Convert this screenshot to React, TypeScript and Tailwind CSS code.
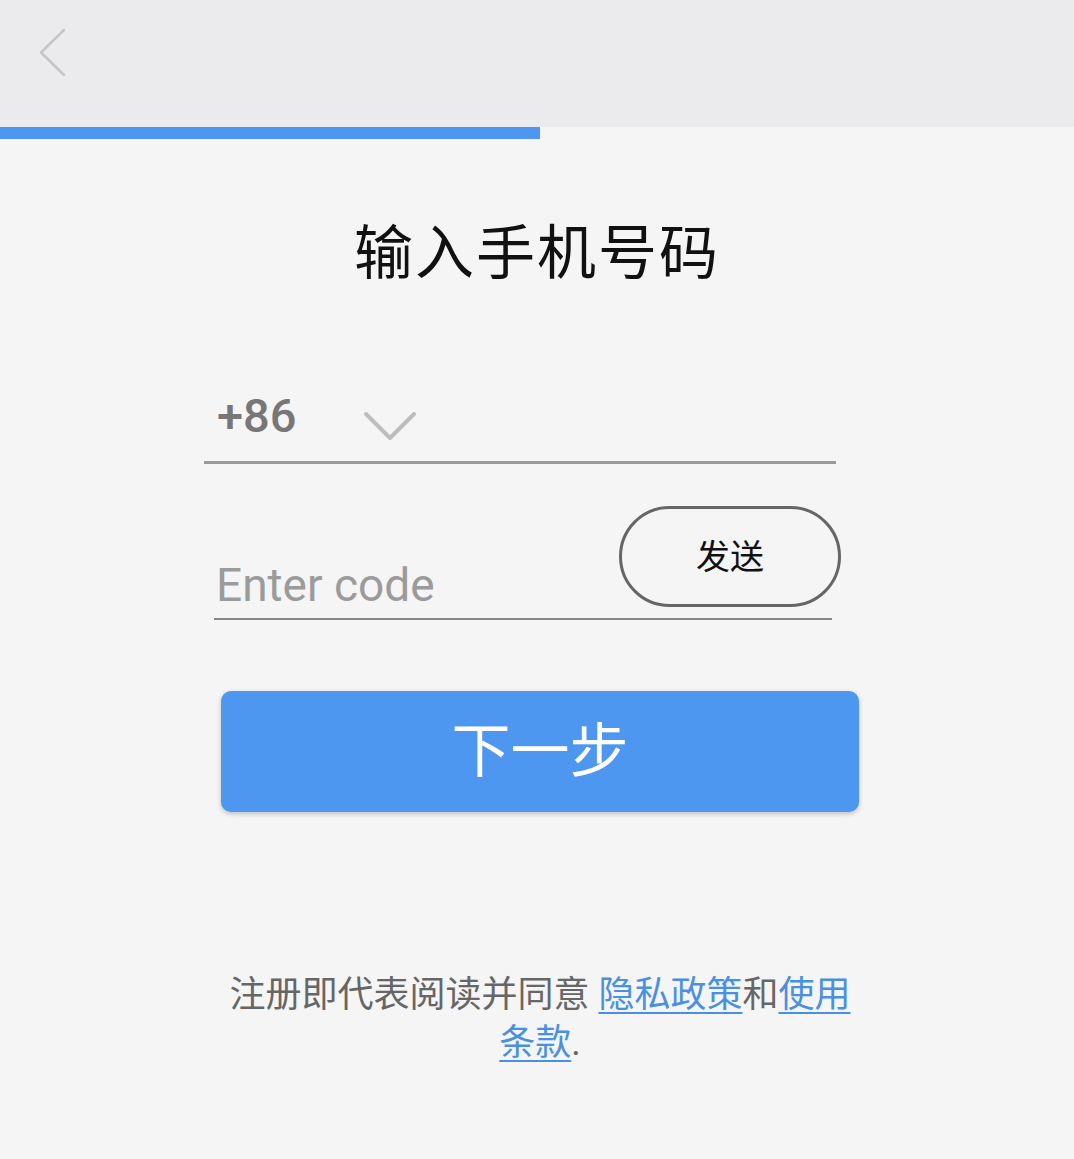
import React from 'react'

const sans = 'font-["Roboto","Noto_Sans_CJK_SC",sans-serif]'

export default function App() {
  return (
    <div className={`min-h-[1159px] w-[1074px] bg-[#f5f5f5] ${sans}`}>
      {/* top bar */}
      <header className="h-[127px] bg-[#ebebed] flex items-start">
        <button className="ml-[38px] mt-[28px] w-[30px] h-[50px] flex items-center justify-center">
          <svg width="30" height="50" viewBox="0 0 30 50" fill="none">
            <polyline points="26,2 3,24.5 26,47" stroke="#c6c6c8" strokeWidth="2.5" strokeLinecap="round" strokeLinejoin="round" />
          </svg>
        </button>
      </header>
      <div className="h-3 w-[540px] bg-[#4d97f0]" />

      <main className="flex flex-col">
        <h1 className="mt-[85px] text-center text-[59px] leading-none text-[#111] font-normal tracking-[2px]">
          输入手机号码
        </h1>

        {/* country code */}
        <div className="mt-[97px] ml-[204px] w-[632px] border-b-[3px] border-[#9a9a9a] pt-[12px] pb-[20px] pl-[13px] flex items-start">
          <span className="text-[47px] leading-none font-medium text-[#777]">+86</span>
          <svg className="ml-[67px] mt-[19px]" width="52" height="30" viewBox="0 0 52 30" fill="none">
            <polyline points="2,3 26,27 50,3" stroke="#bdbdbd" strokeWidth="4" strokeLinecap="round" strokeLinejoin="round" />
          </svg>
        </div>

        {/* verification code */}
        <div className="mt-[42px] ml-[214px] w-[618px] border-b-2 border-[#888] flex items-end justify-between">
          <span className="pl-[2px] mb-[10px] text-[46px] leading-none text-[#9b9b9b]">Enter code</span>
          <button className="mb-[11px] mr-[-9px] w-[222px] h-[101px] rounded-full border-[3px] border-[#666] text-[34px] leading-none text-[#111] flex items-center justify-center">
            发送
          </button>
        </div>

        <button className="mt-[71px] ml-[221px] w-[638px] h-[121px] rounded-[10px] bg-[#4d97f0] shadow-[0_2px_5px_rgba(0,0,0,0.22)] text-white text-[59px] leading-none flex items-center justify-center">
          下一步
        </button>

        <p className="mt-[159px] ml-[221px] w-[638px] text-center text-[36px] leading-[48px] text-[#666]">
          注册即代表阅读并同意{' '}
          <a className="text-[#4a90e2] underline underline-offset-[5px] decoration-2">隐私政策</a>和
          <a className="text-[#4a90e2] underline underline-offset-[5px] decoration-2">使用条款</a>.
        </p>
      </main>
    </div>
  )
}
